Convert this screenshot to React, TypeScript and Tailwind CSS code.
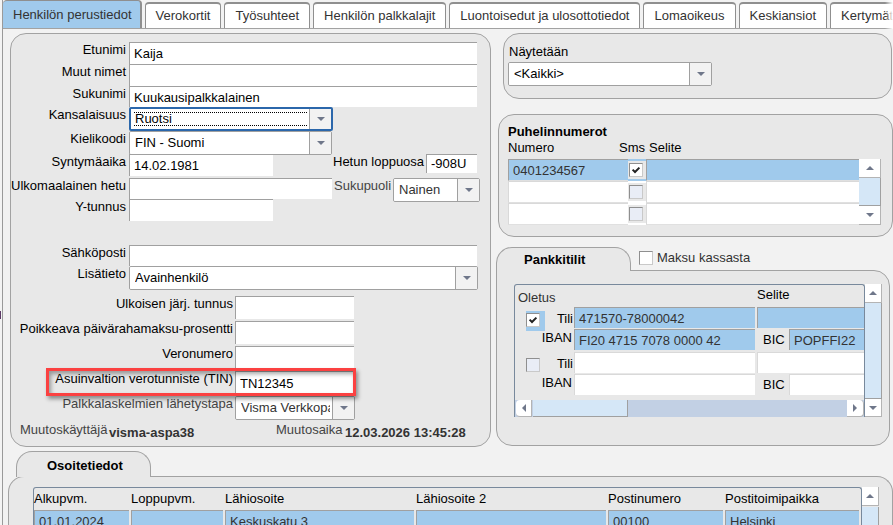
import React, { type ReactNode } from "react";

const TABS = [
  "Henkilön perustiedot",
  "Verokortit",
  "Työsuhteet",
  "Henkilön palkkalajit",
  "Luontoisedut ja ulosottotiedot",
  "Lomaoikeus",
  "Keskiansiot",
  "Kertymät",
];

const PANEL = "rounded-[16px] border border-[#a2a2a2] bg-[#e8e8e8]";
const FIELD =
  "block rounded-none border-0 border-t border-l border-[#a0a0a0] bg-white pl-1 outline-none";
const BLUE_CELL = "border-[#a0a0a0] bg-[#a0caec] text-[#333333]";
const EMPTY_CELL = "border-[#d9d9d9] bg-white text-[#333333]";

function Arrow({ dir, className = "" }: { dir: "up" | "down" | "left" | "right"; className?: string }) {
  const points = {
    up: "0,5 4,1 8,5",
    down: "0,1 8,1 4,5",
    left: "5,0 5,8 1,4",
    right: "1,0 5,4 1,8",
  }[dir];
  const vertical = dir === "up" || dir === "down";
  return (
    <svg
      width={vertical ? 8 : 6}
      height={vertical ? 6 : 8}
      viewBox={vertical ? "0 0 8 6" : "0 0 6 8"}
      className={className}
      aria-hidden="true"
    >
      <polygon points={points} fill="#6f778a" />
    </svg>
  );
}

function TextField({ id, value = "", className = "" }: { id: string; value?: string; className?: string }) {
  return <input id={id} type="text" defaultValue={value} className={`${FIELD} ${className}`} />;
}

function SelectField({
  id,
  value,
  className = "",
  focused = false,
  muted = false,
}: {
  id: string;
  value: string;
  className?: string;
  focused?: boolean;
  muted?: boolean;
}) {
  return (
    <span
      className={`grid h-6 overflow-hidden rounded-[2px] bg-white ${
        focused ? "border-2 border-[#2b67ab]" : "border border-[#a0a0a0]"
      } ${className}`}
    >
      <select
        id={id}
        defaultValue={value}
        className={`col-start-1 row-start-1 w-full min-w-0 appearance-none bg-white pr-6 outline-none ${
          focused ? "pl-1" : "pl-[5px]"
        } ${muted ? "text-[#333333]" : "text-black"}`}
      >
        <option>{value}</option>
      </select>
      {focused && (
        <span className="pointer-events-none col-start-1 row-start-1 my-[3px] mr-6 ml-[3px] border-y border-dotted border-black" />
      )}
      <span className="pointer-events-none col-start-1 row-start-1 flex w-[22px] items-center justify-center justify-self-end border-l border-[#a0a0a0] bg-[#f2f2f2]">
        <Arrow dir="down" />
      </span>
    </span>
  );
}

function Row({
  id,
  label,
  wide = false,
  muted = false,
  className,
  children,
}: {
  id: string;
  label: string;
  wide?: boolean;
  muted?: boolean;
  className: string;
  children: ReactNode;
}) {
  return (
    <div className={`flex items-start ${className}`}>
      <label
        htmlFor={id}
        className={`shrink-0 text-right leading-4 whitespace-nowrap ${
          wide ? "mr-0.5 w-[222px]" : "mr-[3px] w-[115px]"
        } ${muted ? "text-[#444444]" : "text-black"}`}
      >
        {label}
      </label>
      {children}
    </div>
  );
}

function CheckBox({ id, label, checked = false, plain = false }: { id: string; label?: string; checked?: boolean; plain?: boolean }) {
  return (
    <span className="grid size-[14px]">
      <input
        id={id}
        type="checkbox"
        defaultChecked={checked}
        aria-label={label}
        className={`col-start-1 row-start-1 size-[14px] appearance-none border border-t-[#8f8f8f] border-r-[#c9c9c9] border-b-[#c9c9c9] border-l-[#8f8f8f] ${
          checked || plain ? "bg-white" : "bg-[#e9edf6]"
        }`}
      />
      {checked && (
        <svg viewBox="0 0 14 14" className="pointer-events-none col-start-1 row-start-1 size-[14px]" aria-hidden="true">
          <path d="M3.6 6.6 L6 9 L10.4 4.6" fill="none" stroke="#222222" strokeWidth="2" />
        </svg>
      )}
    </span>
  );
}

function ScrollButton({ dir, className }: { dir: "up" | "down" | "left" | "right"; className: string }) {
  return (
    <button
      type="button"
      aria-label={dir}
      className={`flex shrink-0 items-center justify-center border-r border-b border-[#b4b4b4] bg-white ${className}`}
    >
      <Arrow dir={dir} />
    </button>
  );
}

function PersonPanel() {
  return (
    <form className={`${PANEL} w-[481px] shrink-0 pt-2 pb-[5px]`}>
      <Row id="etunimi" label="Etunimi" className="h-[22px]">
        <TextField id="etunimi" value="Kaija" className="h-[22px] w-[348px]" />
      </Row>
      <Row id="muut" label="Muut nimet" className="h-[22px]">
        <TextField id="muut" className="h-[22px] w-[348px]" />
      </Row>
      <Row id="sukunimi" label="Sukunimi" className="h-[21px]">
        <TextField id="sukunimi" value="Kuukausipalkkalainen" className="h-[21px] w-[348px]" />
      </Row>
      <Row id="kansalaisuus" label="Kansalaisuus" className="h-6">
        <SelectField id="kansalaisuus" value="Ruotsi" focused className="w-[204px]" />
      </Row>
      <Row id="kieli" label="Kielikoodi" className="h-[23px]">
        <SelectField id="kieli" value="FIN - Suomi" className="w-[203px]" />
      </Row>
      <Row id="syntyma" label="Syntymäaika" className="h-6">
        <TextField id="syntyma" value="14.02.1981" className="h-[22px] w-36" />
        <label htmlFor="hetu" className="ml-[60px] w-[91px] leading-4 whitespace-nowrap">
          Hetun loppuosa
        </label>
        <TextField id="hetu" value="-908U" className="ml-[2px] h-[19px] w-[51px]" />
      </Row>
      <Row id="ulkohetu" label="Ulkomaalainen hetu" className="h-[21px]">
        <TextField id="ulkohetu" className="h-[21px] w-[203px]" />
        <label htmlFor="sukupuoli" className="ml-0.5 w-[57px] leading-4 text-[#444444]">
          Sukupuoli
        </label>
        <SelectField id="sukupuoli" value="Nainen" muted className="ml-[2px] w-[87px]" />
      </Row>
      <Row id="ytunnus" label="Y-tunnus" className="h-[46px]">
        <TextField id="ytunnus" className="h-[22px] w-36" />
      </Row>
      <Row id="sahkoposti" label="Sähköposti" className="h-[21px]">
        <TextField id="sahkoposti" className="h-[21px] w-[348px]" />
      </Row>
      <Row id="lisatieto" label="Lisätieto" className="h-[30px]">
        <SelectField id="lisatieto" value="Avainhenkilö" className="w-[349px]" />
      </Row>
      <Row id="ulkoinen" label="Ulkoisen järj. tunnus" wide className="h-[25px]">
        <TextField id="ulkoinen" className="h-[23px] w-[119px]" />
      </Row>
      <Row id="paivaraha" label="Poikkeava päivärahamaksu-prosentti" wide className="h-[25px]">
        <TextField id="paivaraha" className="h-[23px] w-[119px]" />
      </Row>
      <Row id="veronumero" label="Veronumero" wide className="h-[25px]">
        <TextField id="veronumero" className="h-[23px] w-[119px]" />
      </Row>
      <Row id="tin" label="Asuinvaltion verotunniste (TIN)" wide className="relative h-[25px]">
        <TextField id="tin" value="TN12345" className="h-[23px] w-[119px]" />
        <span className="pointer-events-none absolute -top-[3px] left-[35px] z-10 h-[28px] w-[310px] border-[3px] border-[#fb4141] shadow-[2px_3px_4px_rgba(0,0,0,0.4),inset_2px_3px_4px_rgba(0,0,0,0.35)]" />
      </Row>
      <Row id="palkka" label="Palkkalaskelmien lähetystapa" wide muted className="h-[26px]">
        <SelectField id="palkka" value="Visma Verkkopalkka" muted className="w-[120px]" />
      </Row>
      <div className="flex h-[19px] items-start pl-[9px] leading-4 text-[#444444]">
        <span className="w-[89px]">Muutoskäyttäjä</span>
        <b className="w-[167px] pt-[3px] text-[#333333]">visma-aspa38</b>
        <span className="w-[69px]">Muutosaika</span>
        <b className="pt-[3px] text-[#333333]">12.03.2026 13:45:28</b>
      </div>
    </form>
  );
}

function PhonePanel() {
  const rows = ["0401234567", "", ""];
  return (
    <section className={`${PANEL} ml-[7px] mt-[15px] flex flex-col pt-[9px] pr-[11px] pb-[11px] pl-[9px]`}>
      <h2 className="leading-4 font-bold text-black">Puhelinnumerot</h2>
      <div className="flex">
        <table className="w-full table-fixed border-separate border-spacing-0">
          <thead>
            <tr className="h-[19px] align-top leading-4">
              <th className="w-[120px] p-0 text-left font-normal">Numero</th>
              <th className="w-[18px] p-0 font-normal">
                <span className="flex justify-end pr-px">Sms</span>
              </th>
              <th className="p-0 pl-[3px] text-left font-normal">Selite</th>
            </tr>
          </thead>
          <tbody>
            {rows.map((num, i) => {
              const cell = i === 0 ? BLUE_CELL : EMPTY_CELL;
              return (
                <tr key={i} className="h-[22px]">
                  <td className="p-0">
                    <input
                      aria-label="Numero"
                      defaultValue={num}
                      className={`block h-[22px] w-full border-t border-l border-b border-b-[#e0e0e0] pl-1 outline-none ${cell}`}
                    />
                  </td>
                  <td className={`p-0 ${i === 0 ? "bg-[#a0caec]" : "bg-white"}`}>
                    <span className="flex h-[18px] w-[18px] items-center border-r-2 border-[#e8e8e8] bg-[#e8e8e8] pl-px">
                      <CheckBox id={`sms${i}`} label="Sms" checked={i === 0} />
                    </span>
                  </td>
                  <td className="p-0">
                    <input
                      aria-label="Selite"
                      className={`block h-[22px] w-full border-t border-l border-b border-b-[#e0e0e0] pl-1 outline-none ${cell}`}
                    />
                  </td>
                </tr>
              );
            })}
          </tbody>
        </table>
        <div className="mt-[19px] flex w-[22px] shrink-0 flex-col">
          <ScrollButton dir="up" className="h-[19px]" />
          <div className="flex-1 border-r border-b border-[#a0a0a0] bg-[#d5e7f7]" />
          <ScrollButton dir="down" className="h-[19px]" />
        </div>
      </div>
    </section>
  );
}

function Account({ n, tili = "", iban = "", bic = "" }: { n: number; tili?: string; iban?: string; bic?: string }) {
  const on = tili !== "";
  const cell = `h-[21px] border-t border-l pl-1 outline-none ${on ? BLUE_CELL : EMPTY_CELL}`;
  return (
    <div className="flex h-[45px] leading-4">
      <div className="flex w-[59px] shrink-0 items-start pl-[11px]">
        <span className={`mt-1 h-5 w-[19px] pt-[2px] ${on ? "bg-[#a0caec]" : ""}`}>
          <CheckBox id={`oletus${n}`} label="Oletus" checked={on} />
        </span>
        <div className="flex flex-1 flex-col items-end pr-px">
          <label htmlFor={`tili${n}`} className="mt-1">
            Tili
          </label>
          <label htmlFor={`iban${n}`} className="mt-[3px] mr-px flex w-0 justify-end">
            IBAN
          </label>
        </div>
      </div>
      <div className="mr-0.5 flex w-[181px] shrink-0 flex-col gap-px">
        <input id={`tili${n}`} defaultValue={tili} className={cell} />
        <input id={`iban${n}`} defaultValue={iban} className={cell} />
      </div>
      <div className="flex min-w-0 flex-1 flex-col gap-px">
        <input aria-label="Selite" className={cell} />
        <div className="flex">
          <label htmlFor={`bic${n}`} className="w-8 shrink-0 pt-[3px] pl-1.5">
            BIC
          </label>
          <input id={`bic${n}`} defaultValue={bic} className={`${cell} w-full min-w-0`} />
        </div>
      </div>
    </div>
  );
}

function BankPanel() {
  return (
    <section className="mt-[10px] mr-[3px] ml-[5px] flex flex-1 flex-col">
      <div className="relative z-10 -mb-px flex h-[24px] items-start">
        <h2 className="h-6 w-[135px] rounded-t-[16px] border border-b-0 border-[#a2a2a2] bg-[#e8e8e8] pt-1 pl-[27px] leading-4 font-bold text-black">
          Pankkitilit
        </h2>
        <div className="flex items-center gap-1 pt-[3px] pl-2 leading-4 text-[#333333]">
          <CheckBox id="kassa" plain />
          <label htmlFor="kassa">Maksu kassasta</label>
        </div>
      </div>
      <div className="flex-1 rounded-[16px] rounded-tl-none border border-[#a2a2a2] bg-[#e8e8e8] pt-[13px] pr-[7px] pb-[26px] pl-[17px]">
        <div className="flex">
          <div className="min-w-0 flex-1 rounded-t-[3px] border border-b-0 border-[#78899c]">
            <div className="flex h-[22px] leading-4">
              <span className="w-[242px] pt-[5px] pl-[3px] text-[#333333]">Oletus</span>
              <span className="pt-[2px]">Selite</span>
            </div>
            <Account n={1} tili="471570-78000042" iban="FI20 4715 7078 0000 42" bic="POPFFI22" />
            <Account n={2} />
            <div className="mt-[3px] flex h-[17px] bg-[#c2d0e4] pl-px">
              <ScrollButton dir="left" className="w-4 rounded-l-[4px]" />
              <div className="ml-px w-[95px] border-r border-b border-[#a0a0a0] bg-[#d5e7f7]" />
              <div className="flex-1" />
              <ScrollButton dir="right" className="w-[17px] rounded-r-[4px]" />
            </div>
          </div>
          <div className="flex w-[17px] shrink-0 flex-col">
            <ScrollButton dir="up" className="h-[19px]" />
            <div className="flex-1 border-r border-b border-[#a0a0a0] bg-[#d5e7f7]" />
            <ScrollButton dir="down" className="h-[18px]" />
          </div>
        </div>
      </div>
    </section>
  );
}

const ADDRESS_COLUMNS = [
  { name: "Alkupvm.", value: "01.01.2024", width: "w-[97px]" },
  { name: "Loppupvm.", value: "", width: "w-[94px]" },
  { name: "Lähiosoite", value: "Keskuskatu 3", width: "w-[191px]" },
  { name: "Lähiosoite 2", value: "", width: "w-[192px]" },
  { name: "Postinumero", value: "00100", width: "w-[117px]" },
  { name: "Postitoimipaikka", value: "Helsinki", width: "" },
];

function AddressPanel() {
  return (
    <section className="mt-1 ml-[5px] flex min-h-[140px] flex-1 flex-col">
      <h2 className="relative z-10 -mb-px ml-2 h-[26px] w-[135px] rounded-t-[16px] border border-b-0 border-[#a2a2a2] bg-[#e8e8e8] pt-1.5 pl-[30px] leading-4 font-bold text-black">
        Osoitetiedot
      </h2>
      <div className="flex flex-1 rounded-t-[16px] border border-b-0 border-[#a2a2a2] bg-[#e8e8e8] pt-[10px] pr-[13px] pl-6">
        <div className="min-w-0 flex-1 rounded-t-[3px] border border-b-0 border-[#78899c]">
          <table className="w-full table-fixed border-separate border-spacing-0">
            <thead>
              <tr className="h-[22px] leading-4">
                {ADDRESS_COLUMNS.map((c) => (
                  <th key={c.name} className={`p-0 text-left font-normal ${c.width}`}>
                    {c.name}
                  </th>
                ))}
              </tr>
            </thead>
            <tbody>
              {[0, 1, 2].map((r) => (
                <tr key={r} className="h-[22px] align-top">
                  {ADDRESS_COLUMNS.map((c) => (
                    <td key={c.name} className="p-0 pr-0.5">
                      <input
                        aria-label={c.name}
                        defaultValue={r === 0 ? c.value : ""}
                        className={`block h-[21px] w-full border-t border-l pl-1 outline-none ${r === 0 ? BLUE_CELL : EMPTY_CELL}`}
                      />
                    </td>
                  ))}
                </tr>
              ))}
            </tbody>
          </table>
        </div>
        <div className="flex w-[17px] shrink-0 flex-col">
          <ScrollButton dir="up" className="h-[19px]" />
          <div className="mt-px flex-1 border-r border-[#a0a0a0] bg-[#d5e7f7]" />
        </div>
      </div>
    </section>
  );
}

export default function App() {
  return (
    <div className="flex h-screen overflow-hidden bg-[#f2f2f2] font-['Liberation_Sans',Arial,sans-serif] text-[13px] text-black">
      <div className="w-0.5 shrink-0 bg-[#f4f4f4] pt-[311px]">
        <div className="h-2 w-px bg-[#5b3a66]" />
      </div>
      <main className="flex min-w-0 flex-1 flex-col border-l border-[#9a9a9a]">
        <div className="relative shrink-0">
          <nav className="flex h-[29px] items-end gap-[3px] overflow-hidden border-b border-[#a2a2a2]">
            {TABS.map((t, i) => (
              <button
                key={t}
                type="button"
                className={`shrink-0 rounded-t-[4px] whitespace-nowrap text-[#333333] ${
                  i === 0
                    ? "h-7 border-t border-r-2 border-[#8f8f8f] bg-[#a0caec] pt-px pr-2 pl-[10px]"
                    : "h-[26px] border-x border-t-2 border-[#8f8f8f] bg-white px-[10px] pb-px"
                }`}
              >
                {t}
              </button>
            ))}
          </nav>
          <div className="pointer-events-none absolute inset-y-0 right-0 w-2 bg-gradient-to-r from-transparent to-white" />
        </div>
        <div className="mt-1 flex shrink-0 pl-[7px]">
          <PersonPanel />
          <div className="flex min-w-0 flex-1 flex-col pb-px">
            <section className={`${PANEL} mr-px ml-3 h-[66px] pt-[10px] pl-1`}>
              <label htmlFor="naytetaan" className="block leading-4">
                <span className="pl-px">Näytetään</span>
              </label>
              <SelectField id="naytetaan" value="<Kaikki>" className="mt-[2px] w-[204px]" />
            </section>
            <PhonePanel />
            <BankPanel />
          </div>
        </div>
        <AddressPanel />
      </main>
    </div>
  );
}
